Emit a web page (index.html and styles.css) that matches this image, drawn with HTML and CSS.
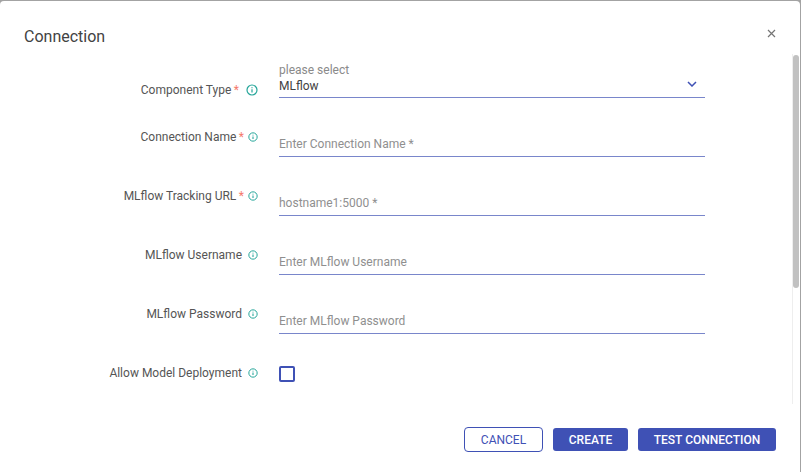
FILE: index.html
```html
<!DOCTYPE html>
<html lang="en">
<head>
<meta charset="utf-8">
<title>Connection</title>
<link rel="stylesheet" href="styles.css">
</head>
<body>
<div class="dialog">
  <header class="head">
    <h1 class="title">Connection</h1>
    <button class="close" aria-label="Close">
      <svg width="9" height="9" viewBox="0 0 9 9"><path d="M1 1l7 7M8 1L1 8" stroke="#757575" stroke-width="1.2" fill="none"/></svg>
    </button>
  </header>
  <div class="body">
    <form class="form">
      <div class="row row-select">
        <div class="label label-wide"><span>Component Type</span><span class="req">*</span><svg class="info info-big" viewBox="0 0 12 12"><circle cx="6" cy="6" r="5" fill="none" stroke="#26a69a" stroke-width="1.2"/><path d="M6 5.3v3.2M6 3.2v1.1" stroke="#26a69a" stroke-width="1.2"/></svg></div>
        <div class="field"><div class="hint">please select</div><div class="value">MLflow<svg class="chev" width="10" height="6" viewBox="0 0 10 6"><path d="M1 1l4 4 4-4" stroke="#3f51b5" stroke-width="1.5" fill="none"/></svg></div></div>
      </div>
      <div class="row">
        <div class="label"><span>Connection Name</span><span class="req">*</span><svg class="info" viewBox="0 0 12 12"><circle cx="6" cy="6" r="5" fill="none" stroke="#26a69a" stroke-width="1.2"/><path d="M6 5.3v3.2M6 3.2v1.1" stroke="#26a69a" stroke-width="1.3"/></svg></div>
        <div class="field"><div class="ph">Enter Connection Name *</div></div>
      </div>
      <div class="row">
        <div class="label"><span>MLflow Tracking URL</span><span class="req">*</span><svg class="info" viewBox="0 0 12 12"><circle cx="6" cy="6" r="5" fill="none" stroke="#26a69a" stroke-width="1.2"/><path d="M6 5.3v3.2M6 3.2v1.1" stroke="#26a69a" stroke-width="1.3"/></svg></div>
        <div class="field"><div class="ph">hostname1:5000 *</div></div>
      </div>
      <div class="row">
        <div class="label"><span>MLflow Username</span><svg class="info info-gap" viewBox="0 0 12 12"><circle cx="6" cy="6" r="5" fill="none" stroke="#26a69a" stroke-width="1.2"/><path d="M6 5.3v3.2M6 3.2v1.1" stroke="#26a69a" stroke-width="1.3"/></svg></div>
        <div class="field"><div class="ph">Enter MLflow Username</div></div>
      </div>
      <div class="row">
        <div class="label"><span>MLflow Password</span><svg class="info info-gap" viewBox="0 0 12 12"><circle cx="6" cy="6" r="5" fill="none" stroke="#26a69a" stroke-width="1.2"/><path d="M6 5.3v3.2M6 3.2v1.1" stroke="#26a69a" stroke-width="1.3"/></svg></div>
        <div class="field"><div class="ph">Enter MLflow Password</div></div>
      </div>
      <div class="row row-check">
        <div class="label"><span>Allow Model Deployment</span><svg class="info info-gap" viewBox="0 0 12 12"><circle cx="6" cy="6" r="5" fill="none" stroke="#26a69a" stroke-width="1.2"/><path d="M6 5.3v3.2M6 3.2v1.1" stroke="#26a69a" stroke-width="1.3"/></svg></div>
        <div class="check"></div>
      </div>
    </form>
    <div class="scrollbar"><div class="thumb"></div></div>
  </div>
  <footer class="foot">
    <button class="btn btn-outline">CANCEL</button>
    <button class="btn btn-fill btn-create">CREATE</button>
    <button class="btn btn-fill btn-test">TEST CONNECTION</button>
  </footer>
</div>
</body>
</html>
```
FILE: styles.css
```css
* { box-sizing: border-box; }
html, body { margin: 0; height: 100%; }
body {
  background: #a3a3a3;
  font-family: Roboto, "Liberation Sans", sans-serif;
  overflow: hidden;
  padding: 1px 1px 0 0;
}
.dialog {
  width: 800px;
  height: 471px;
  background: #fff;
  border-radius: 4px 4px 0 0;
  display: flex;
  flex-direction: column;
}
.head {
  height: 53px;
  flex: none;
  display: flex;
  justify-content: space-between;
  align-items: flex-start;
  padding: 26px 24px 0 24px;
}
.title {
  margin: 0;
  font-size: 16px;
  font-weight: 400;
  line-height: 20px;
  color: #424242;
}
.close {
  border: 0;
  background: none;
  padding: 0;
  width: 9px;
  height: 9px;
  margin-top: 2px;
  display: block;
  line-height: 0;
}
.body {
  flex: none;
  height: 350px;
  display: flex;
  justify-content: space-between;
}
.form {
  width: 705px;
  padding-top: 1px;
  display: flex;
  flex-direction: column;
}
.row {
  display: grid;
  grid-template-columns: 279px 426px;
  height: 59px;
  flex: none;
}
.row-select { height: 43px; }
.label {
  display: flex;
  justify-content: flex-end;
  align-items: center;
  height: 16px;
  margin-top: 31px;
  padding-right: 21px;
  font-size: 12px;
  color: #555;
}
.label-wide { margin-top: 27px; }
.req { color: #f4796b; margin-left: 2.5px; }
.info { width: 10px; height: 10px; margin-left: 4px; flex: none; }
.info-big { width: 12px; height: 12px; margin-left: 7px; }
.info-gap { margin-left: 6px; }
.field {
  border-bottom: 1px solid #7986cb;
  display: flex;
  flex-direction: column;
  justify-content: flex-end;
  height: 59px;
  font-size: 12px;
}
.row-select .field { height: 43px; }
.hint { color: #8a8a8a; line-height: 14px; }
.value {
  color: #424242;
  line-height: 16px;
  height: 20px;
  padding: 1px 8px 0 0;
  display: flex;
  justify-content: space-between;
}
.chev { margin-top: 3px; }
.ph { color: #8f8f8f; line-height: 16px; height: 20px; }
.row-check { height: auto; }
.check {
  width: 16px;
  height: 16px;
  margin-top: 32px;
  border: 2px solid #3f51b5;
  border-radius: 2px;
}
.scrollbar {
  width: 8px;
  height: 350px;
  padding-top: 1px;
  border-left: 1px solid #eeeeee;
}
.thumb {
  width: 6px;
  height: 233px;
  background: #c1c1c1;
  border-radius: 3px;
}
.foot {
  flex: 1;
  display: flex;
  justify-content: flex-end;
  align-items: flex-start;
  gap: 10px;
  padding: 24px 24px 0 0;
}
.btn {
  height: 23px;
  border-radius: 3px;
  font-family: inherit;
  font-size: 12px;
  font-weight: 500;
  padding: 0;
}
.btn-outline {
  width: 79px;
  height: 25px;
  margin-top: -1px;
  background: #fff;
  border: 1px solid #3f51b5;
  border-radius: 4px;
  color: #3f51b5;
  font-weight: 400;
}
.btn-fill { background: #3f51b5; border: 0; color: #fff; }
.btn-create { width: 75px; }
.btn-test { width: 138px; }
```
